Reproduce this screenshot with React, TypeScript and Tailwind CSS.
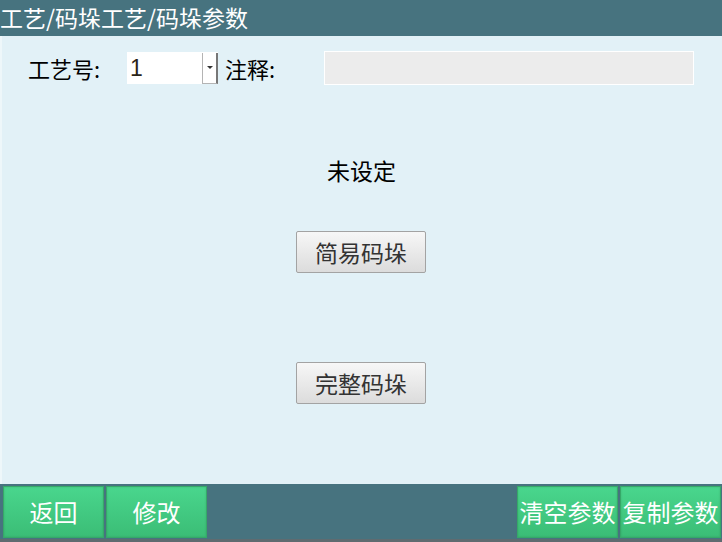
const cjk = { fontFamily: '"Microsoft YaHei", "Noto Sans CJK SC", "Noto Sans", sans-serif' }

function FootButton({ label }: { label: string }) {
  return (
    <button
      className="w-[101px] h-[52px] flex items-center justify-center text-white text-[24px] border border-[#36a868] bg-gradient-to-b from-[#49d68d] to-[#3bbd76] shadow-[inset_0_0_2px_rgba(0,0,0,0.15)]"
      style={cjk}
    >
      {label}
    </button>
  )
}

function GrayButton({ label }: { label: string }) {
  return (
    <button
      className="w-[130px] h-[42px] flex items-center justify-center text-[#333] text-[23px] rounded-[2px] border border-[#a3a3a3] bg-gradient-to-b from-[#f7f7f7] to-[#dcdcdc]"
      style={cjk}
    >
      {label}
    </button>
  )
}

export default function App() {
  return (
    <div className="w-[722px] h-[542px] flex flex-col bg-[#e2f1f7] overflow-hidden" style={cjk}>
      {/* title bar */}
      <div className="h-[36px] shrink-0 bg-[#47737f] flex items-center text-white text-[23px] leading-none pb-[2px]">
        工艺/码垛工艺/码垛参数
      </div>

      <div className="flex-1 flex flex-col border-l-2 border-[#eef7fa]">
        {/* parameter row */}
        <div className="flex items-center h-[34px] mt-[15px] text-[22px] text-black leading-none">
          <span className="ml-[26px] w-[99px]">工艺号:</span>
          <div className="w-[91px] h-[32px] bg-white flex items-center relative">
            <span className="ml-[3px] text-[23px] text-[#2a2418]" style={{ fontFamily: '"Liberation Sans", sans-serif' }}>1</span>
            <div className="absolute right-0 top-[1px] w-[16px] h-[31px] border-l border-b border-[#b4b4b4] border-r-2 border-r-[#777] flex items-center justify-center">
              <svg width="6" height="4" viewBox="0 0 6 4">
                <path d="M0 0 L6 0 L3 3 Z" fill="#333" />
              </svg>
            </div>
          </div>
          <span className="ml-[7px] w-[99px]">注释:</span>
          <div className="w-[370px] h-[34px] bg-[#ececec] border border-white" />
        </div>

        {/* body */}
        <div className="flex flex-col items-center -ml-[2px]">
          <div className="mt-[74px] text-[23px] leading-none text-black ml-[1px]">未设定</div>
          <div className="mt-[49px]"><GrayButton label="简易码垛" /></div>
          <div className="mt-[89px]"><GrayButton label="完整码垛" /></div>
        </div>
      </div>

      {/* footer */}
      <div className="h-[55px] shrink-0 bg-[#47737f] flex items-start pt-[2px] pl-[3px] pr-[1px] gap-[2px]">
        <FootButton label="返回" />
        <FootButton label="修改" />
        <div className="flex-1" />
        <FootButton label="清空参数" />
        <FootButton label="复制参数" />
      </div>
      <div className="h-[3px] shrink-0 bg-[#5f6b70]" />
    </div>
  )
}
